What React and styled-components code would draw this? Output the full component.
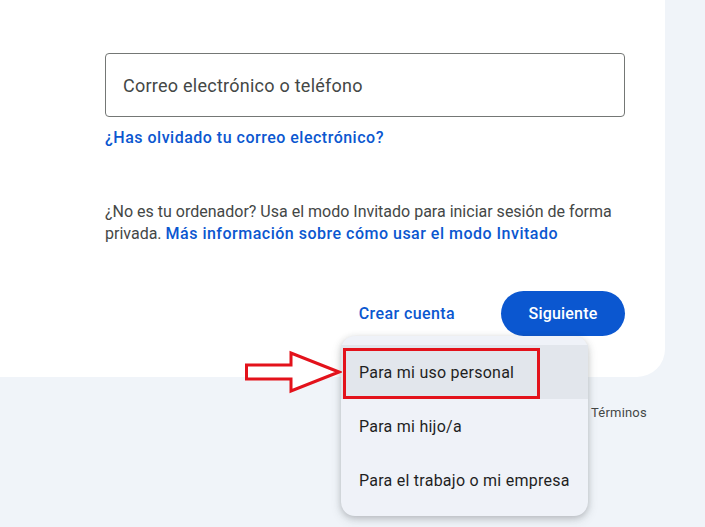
import React from "react";
import styled, { createGlobalStyle } from "styled-components";

const GlobalStyle = createGlobalStyle`
  html, body {
    margin: 0;
    padding: 0;
    background: #f0f4f9;
  }
  body {
    font-family: Roboto, "Noto Sans", Arial, sans-serif;
  }
`;

const Page = styled.div`
  position: relative;
  width: 705px;
  height: 527px;
  overflow: hidden;
  background: #f0f4f9;
`;

const Card = styled.div`
  box-sizing: border-box;
  width: 665px;
  height: 377px;
  padding: 53px 40px 0 105px;
  background: #ffffff;
  border-bottom-right-radius: 28px;
`;

const EmailField = styled.div`
  box-sizing: border-box;
  height: 64px;
  display: flex;
  align-items: center;
  padding: 0 17px;
  border: 1px solid #747775;
  border-radius: 4px;
  font-size: 18px;
  letter-spacing: 0.25px;
  color: #444746;
`;

const TextLink = styled.a`
  color: #0b57d0;
  font-weight: 500;
  letter-spacing: 0.5px;
  text-decoration: none;
  cursor: pointer;
`;

const ForgotRow = styled.div`
  margin-top: 10px;
  font-size: 16px;
  line-height: 22px;
`;

const Notice = styled.p`
  margin: 52px 0 0;
  font-size: 16px;
  line-height: 22px;
  color: #444746;
`;

const Actions = styled.div`
  display: flex;
  justify-content: flex-end;
  align-items: center;
  gap: 22px;
  margin-top: 46px;
`;

const TextButton = styled.button`
  height: 45px;
  padding: 0 24px;
  border: none;
  background: transparent;
  color: #0b57d0;
  font-family: inherit;
  font-size: 16px;
  font-weight: 500;
  letter-spacing: 0.4px;
`;

const PrimaryButton = styled.button`
  width: 124px;
  height: 45px;
  border: none;
  border-radius: 23px;
  background: #0b57d0;
  color: #ffffff;
  font-family: inherit;
  font-size: 16px;
  font-weight: 500;
  letter-spacing: 0.2px;
`;

const Footer = styled.div`
  padding: 28px 0 0 591px;
  font-size: 13px;
  letter-spacing: 0.2px;
  color: #444746;
`;

const Menu = styled.ul`
  position: absolute;
  left: 341px;
  top: 336px;
  width: 247px;
  margin: 0;
  padding: 9px 0 9px;
  list-style: none;
  background: #eff2f8;
  border-radius: 14px;
  box-shadow: 0 2px 6px rgba(60, 64, 67, 0.25), 0 4px 12px rgba(60, 64, 67, 0.12);
`;

const MenuItem = styled.li`
  height: 54px;
  display: flex;
  align-items: center;
  padding-left: 18px;
  font-size: 16px;
  letter-spacing: 0.25px;
  color: #1f1f1f;
  background: ${(p) => (p.$active ? "#e2e6ec" : "transparent")};
`;

const Highlight = styled.div`
  position: absolute;
  left: 343px;
  top: 348px;
  width: 197px;
  height: 51px;
  box-sizing: border-box;
  border: 3px solid #e3121b;
`;

const Arrow = styled.svg`
  position: absolute;
  left: 244px;
  top: 350px;
`;

const options = ["Para mi uso personal", "Para mi hijo/a", "Para el trabajo o mi empresa"];

export default function App() {
  return (
    <Page>
      <GlobalStyle />
      <Card>
        <EmailField>Correo electrónico o teléfono</EmailField>
        <ForgotRow>
          <TextLink>¿Has olvidado tu correo electrónico?</TextLink>
        </ForgotRow>
        <Notice>
          ¿No es tu ordenador? Usa el modo Invitado para iniciar sesión de forma
          privada. <TextLink>Más información sobre cómo usar el modo Invitado</TextLink>
        </Notice>
        <Actions>
          <TextButton>Crear cuenta</TextButton>
          <PrimaryButton>Siguiente</PrimaryButton>
        </Actions>
      </Card>
      <Footer>Términos</Footer>
      <Menu>
        {options.map((o, i) => (
          <MenuItem key={o} $active={i === 0}>
            {o}
          </MenuItem>
        ))}
      </Menu>
      <Highlight />
      <Arrow width="98" height="44" viewBox="0 0 98 44">
        <path
          d="M2.5 15 L47 15 L47 3 L95 22 L47 41 L47 29 L2.5 29 Z"
          fill="#ffffff"
          stroke="#e3121b"
          strokeWidth="3"
          strokeLinejoin="miter"
        />
      </Arrow>
    </Page>
  );
}
